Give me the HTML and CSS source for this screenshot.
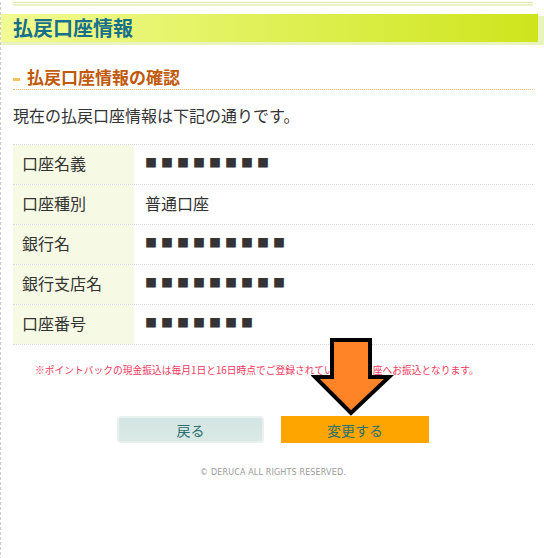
FILE: index.html
```html
<!DOCTYPE html>
<html lang="ja">
<head>
    <meta charset="UTF-8">
    <meta name="viewport" content="width=device-width, initial-scale=1.0">
    <title>払戻口座情報</title>
    <link rel="stylesheet" href="styles.css">
</head>
<body>
    <div class="page">
        <div class="topline"></div>
        <div class="title-wrap">
            <h1 class="title">払戻口座情報</h1>
        </div>
        <h2 class="sub">払戻口座情報の確認</h2>
        <p class="lead">現在の払戻口座情報は下記の通りです。</p>
        <div class="info">
            <div class="row">
                <div class="label">口座名義</div>
                <div class="value"><span class="mask">■■■■■■■■</span></div>
            </div>
            <div class="row">
                <div class="label">口座種別</div>
                <div class="value">普通口座</div>
            </div>
            <div class="row">
                <div class="label">銀行名</div>
                <div class="value"><span class="mask">■■■■■■■■■</span></div>
            </div>
            <div class="row">
                <div class="label">銀行支店名</div>
                <div class="value"><span class="mask">■■■■■■■■■</span></div>
            </div>
            <div class="row">
                <div class="label">口座番号</div>
                <div class="value"><span class="mask">■■■■■■■</span></div>
            </div>
        </div>
        <p class="note">※ポイントバックの現金振込は毎月1日と16日時点でご登録されている払戻口座へお振込となります。</p>
        <div class="buttons">
            <a href="#" class="btn btn-back">戻る</a>
            <a href="#" class="btn btn-change">変更する</a>
        </div>
        <p class="copy">© DERUCA ALL RIGHTS RESERVED.</p>
        <!-- arrow pointing at the change button -->
        <svg class="arrow" width="84" height="84" viewBox="0 0 84 84">
            <polygon points="21,4 59,4 59,41 78,41 40,77 4,41 21,41" fill="#ff8427" stroke="#000" stroke-width="4" stroke-linejoin="miter"/>
        </svg>
    </div>
</body>
</html>
```

FILE: styles.css
```css
* {
    margin: 0;
    padding: 0;
    box-sizing: border-box;
}
body {
    background-color: #ffffff;
    color: #333333;
    font-family: "Noto Sans CJK JP", "Noto Sans", sans-serif;
}
.page {
    position: relative;
    min-height: 558px;
    border-left: 1px dashed #cccccc;
    padding: 0 11px 0 12px;
}
/* Top lines */
.topline {
    margin-top: 2px;
    height: 4px;
    border-top: 1px solid #dde7a4;
    border-bottom: 2px solid #ebf2c9;
}
/* Page title */
.title-wrap {
    margin: 8px -11px 0 -12px;
    padding: 0 6px 3px 0;
    background: linear-gradient(to bottom, transparent 2px, #e9f3bd 2px);
}
.title {
    height: 28px;
    line-height: 27px;
    padding-left: 12px;
    font-size: 20px;
    font-weight: bold;
    color: #16708a;
    background: linear-gradient(to right, #f1fb92, #cee51c);
}
/* Sub heading */
.sub {
    margin-top: 20px;
    height: 25px;
    line-height: 23px;
    font-size: 17px;
    font-weight: bold;
    color: #c0590a;
    border-bottom: 1px dotted #f0c070;
}
.sub::before {
    content: "";
    display: inline-block;
    width: 7px;
    height: 3px;
    margin-right: 7px;
    vertical-align: middle;
    background-color: #f8c060;
}
.lead {
    margin-top: 14px;
    font-size: 16px;
    line-height: 23px;
    margin-bottom: 1px;
}
/* Account table */
.info {
    margin-top: 17px;
    border-bottom: 1px dotted #d8d8d8;
}
.row {
    display: flex;
    height: 40px;
    border-top: 1px dotted #d8d8d8;
    font-size: 16px;
    line-height: 1;
}
.label {
    flex: 0 0 121px;
    display: flex;
    align-items: center;
    padding: 0 0 3px 9px;
    background-color: #f6f9e4;
}
.value {
    display: flex;
    align-items: center;
    padding: 0 0 3px 11px;
}
.mask {
    font-size: 12px;
    letter-spacing: 4px;
    color: #333333;
}
/* Note */
.note {
    margin-top: 18px;
    padding-left: 22px;
    font-size: 9.75px;
    line-height: 14px;
    color: #f2385e;
    white-space: nowrap;
}
/* Buttons */
.buttons {
    display: flex;
    justify-content: center;
    gap: 17px;
    margin-top: 39px;
}
.btn {
    display: flex;
    align-items: center;
    justify-content: center;
    height: 27px;
    font-size: 14px;
    text-decoration: none;
    color: #2a7070;
}
.btn-back {
    width: 147px;
    border: 2px solid #e9f1ef;
    border-radius: 4px;
    background: linear-gradient(to bottom, #d2e5e2, #dbe9e6);
}
.btn-change {
    width: 148px;
    background-color: #ffa500;
}
/* Footer */
.copy {
    margin-top: 24px;
    text-align: center;
    font-family: "DejaVu Sans", sans-serif;
    font-size: 8px;
    letter-spacing: 0.15px;
    line-height: 12px;
    color: #9a9a9a;
}
.arrow {
    position: absolute;
    left: 310px;
    top: 334px;
}
```
